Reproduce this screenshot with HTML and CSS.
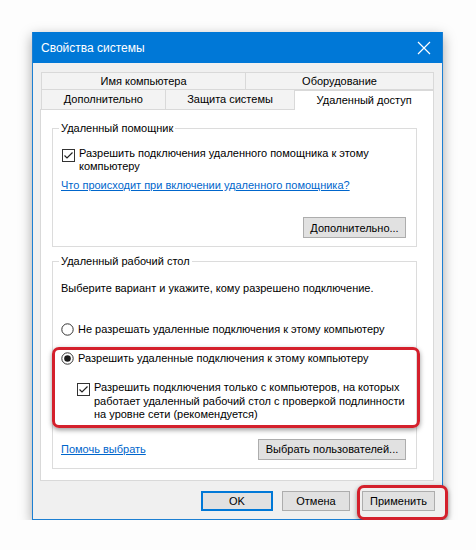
FILE: index.html
```html
<!DOCTYPE html>
<html lang="ru">
<head>
  <meta charset="UTF-8">
  <title>Свойства системы</title>
  <link rel="stylesheet" href="styles.css">
</head>
<body>

  <!-- Dialog window -->
  <div class="window">
    <div class="titlebar">
      <span class="title">Свойства системы</span>
      <svg class="close" width="14" height="14" viewBox="0 0 14 14">
        <path d="M1 1 L13 13 M13 1 L1 13" stroke="#fff" stroke-width="1.2" fill="none"/>
      </svg>
    </div>

    <div class="body">
      <!-- Tabs -->
      <div class="tabs">
        <div class="tab-row top">
          <div class="tab w-name">Имя компьютера</div>
          <div class="tab w-hw">Оборудование</div>
        </div>
        <div class="tab-row bottom">
          <div class="tab w-adv">Дополнительно</div>
          <div class="tab w-prot">Защита системы</div>
          <div class="tab w-remote active">Удаленный доступ</div>
        </div>
      </div>

      <div class="panel">
        <fieldset class="group first">
          <legend>Удаленный помощник</legend>
          <div class="check-row">
            <svg class="box" width="13" height="13" viewBox="0 0 13 13">
              <rect x="0.5" y="0.5" width="12" height="12" fill="#fff" stroke="#333"/>
              <path d="M2.5 6.5 L5 9 L10.5 3.5" stroke="#222" stroke-width="1.2" fill="none"/>
            </svg>
            <span>Разрешить подключения удаленного помощника к этому компьютеру</span>
          </div>
          <a class="link help-link" href="#">Что происходит при включении удаленного помощника?</a>
          <div class="btn-line">
            <button class="btn w-more">Дополнительно...</button>
          </div>
        </fieldset>

        <fieldset class="group second">
          <legend>Удаленный рабочий стол</legend>
          <p class="hint">Выберите вариант и укажите, кому разрешено подключение.</p>
          <div class="radio-row deny">
            <svg class="radio" width="13" height="13" viewBox="0 0 13 13">
              <circle cx="6.5" cy="6.5" r="5.7" fill="#fff" stroke="#333"/>
            </svg>
            <span>Не разрешать удаленные подключения к этому компьютеру</span>
          </div>

          <!-- Highlighted block -->
          <div class="marked">
            <div class="radio-row">
              <svg class="radio" width="13" height="13" viewBox="0 0 13 13">
                <circle cx="6.5" cy="6.5" r="5.7" fill="#fff" stroke="#333"/>
                <circle cx="6.5" cy="6.5" r="3.3" fill="#1a1a1a"/>
              </svg>
              <span>Разрешить удаленные подключения к этому компьютеру</span>
            </div>
            <div class="check-row nla">
              <svg class="box" width="13" height="13" viewBox="0 0 13 13">
                <rect x="0.5" y="0.5" width="12" height="12" fill="#fff" stroke="#333"/>
                <path d="M2.5 6.5 L5 9 L10.5 3.5" stroke="#222" stroke-width="1.2" fill="none"/>
              </svg>
              <span>Разрешить подключения только с компьютеров, на которых работает удаленный рабочий стол с проверкой подлинности на уровне сети (рекомендуется)</span>
            </div>
          </div>

          <div class="btn-line split">
            <a class="link" href="#">Помочь выбрать</a>
            <button class="btn w-users">Выбрать пользователей...</button>
          </div>
        </fieldset>
      </div>

      <!-- Dialog buttons -->
      <div class="actions">
        <button class="btn w-ok default">OK</button>
        <button class="btn w-cancel">Отмена</button>
        <span class="marked-btn">
          <button class="btn w-apply">Применить</button>
        </span>
      </div>
    </div>
  </div>

</body>
</html>
```

FILE: styles.css
```css
html, body {
  margin: 0;
  padding: 0;
  background-color: #fdfdfd;
  font-family: "Liberation Sans", Arial, sans-serif;
  font-size: 11px;
  color: #000;
}

.window {
  width: 409px;
  margin: 32px 0 0 32px;
  border: 1px solid #1c7fd2;
  border-top: none;
  box-shadow: 0 4px 12px rgba(0, 0, 0, 0.35);
}

.titlebar {
  height: 31px;
  background-color: #0078d7;
  display: flex;
  align-items: center;
  justify-content: space-between;
  padding: 0 8px 0 8px;
  color: #fff;
}

.title {
  font-size: 12px;
}

.close {
  margin-right: 3px;
}

.body {
  background-color: #f0f0f0;
  padding: 9px 8px 8px 7px;
}

/* Tabs */
.tabs {
  margin-left: 1px;
}

.tab-row {
  display: flex;
}

.tab {
  box-sizing: border-box;
  border: 1px solid #d9d9d9;
  border-left: none;
  background-color: #f3f3f3;
  text-align: center;
  line-height: 16px;
}

.tab:first-child {
  border-left: 1px solid #d9d9d9;
}

.tab-row.top .tab {
  height: 18px;
}

.tab-row.bottom {
  margin-top: -1px;
  align-items: flex-end;
}

.tab-row.bottom .tab {
  height: 20px;
  line-height: 19px;
  border-bottom: none;
}

.tab.active {
  height: 22px;
  margin-top: -2px;
  background-color: #fff;
  line-height: 18px;
  border-color: #d9d9d9;
  position: relative;
  z-index: 1;
  margin-bottom: -1px;
}

.w-name { width: 205px; }
.w-hw { width: 188px; }
.w-adv { width: 125px; }
.w-prot { width: 130px; }
.w-remote { width: 139px; }

.panel {
  background-color: #fff;
  border: 1px solid #d9d9d9;
  padding: 11px 16px 11px 11px;
}

/* Group boxes */
.group {
  margin: 0;
  padding: 0 10px 8px 8px;
  border: 1px solid #dcdcdc;
  min-width: 0;
}

.group legend {
  padding: 0 2px;
  margin-left: -2px;
  line-height: 14px;
}

.group.second {
  margin-top: 7px;
}

.check-row,
.radio-row {
  display: flex;
  align-items: flex-start;
  gap: 4px;
  line-height: 13px;
}

.group.first .check-row {
  margin-top: 12px;
  padding-left: 1px;
  padding-right: 28px;
}

.check-row .box {
  flex-shrink: 0;
  margin-top: 2px;
}

.radio-row .radio {
  flex-shrink: 0;
  margin-top: 0;
}

.link {
  color: #0066cc;
  text-decoration: underline;
}

.help-link {
  display: block;
  margin-top: 6px;
  line-height: 13px;
}

.btn-line {
  display: flex;
  justify-content: flex-end;
  margin-top: 25px;
}

.btn-line.split {
  justify-content: space-between;
  align-items: center;
  margin-top: 11px;
}

.btn {
  box-sizing: border-box;
  flex-shrink: 0;
  height: 21px;
  padding: 0;
  font-family: inherit;
  font-size: 11px;
  color: #000;
  background-color: #e1e1e1;
  border: 1px solid #adadad;
}

.w-more { width: 103px; }
.w-users { width: 148px; }

.hint {
  margin: 13px 0 0 0;
  line-height: 14px;
}

.radio-row.deny {
  margin-top: 28px;
}

/* Red marker */
.marked {
  margin: 11px -14px 0 -9px;
  padding: 2px 8px 3px 6px;
  border: 3px solid #d4202c;
  border-radius: 7px;
  box-shadow: 0 2px 5px rgba(0, 0, 0, 0.4);
}

.check-row.nla {
  margin-top: 16px;
  padding-left: 16px;
  line-height: 13.5px;
}

/* Dialog buttons */
.actions {
  display: flex;
  align-items: flex-start;
  height: 20px;
  margin-top: 10px;
  padding-left: 161px;
  gap: 9px;
}

.actions .btn {
  height: 20px;
}

.w-ok { width: 72px; }
.w-cancel { width: 68px; }
.w-apply { width: 73px; }

.btn.default {
  border: 2px solid #0078d7;
}

.marked-btn {
  flex-shrink: 0;
  margin: -6px 0 0 -2px;
  padding: 3px 10px 6px 2px;
  border: 3px solid #d4202c;
  border-radius: 7px;
  box-shadow: 0 2px 5px rgba(0, 0, 0, 0.4);
  background-color: #f0f0f0;
}
```
